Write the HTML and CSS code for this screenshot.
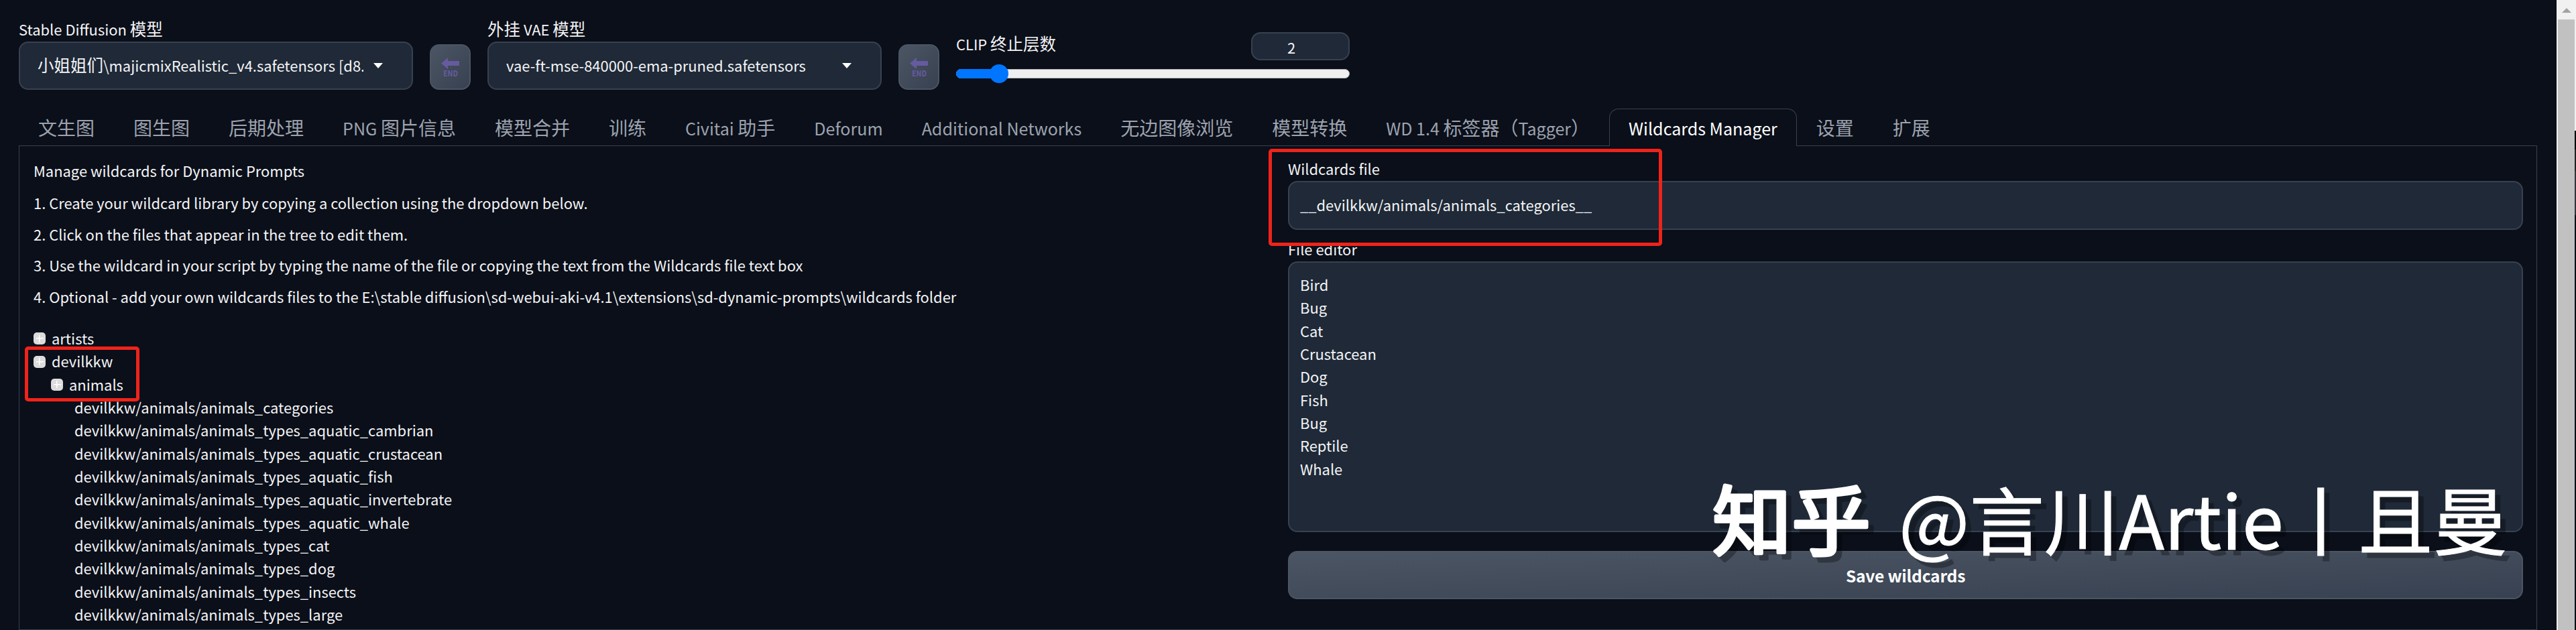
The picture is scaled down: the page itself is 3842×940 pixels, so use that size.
FILE: index.html
```
<!DOCTYPE html>
<html lang="zh-CN">
  <head>
    <meta charset="UTF-8" />
    <meta name="viewport" content="width=device-width, initial-scale=1.0" />
    <title>Stable Diffusion</title>
    <link rel="stylesheet" href="styles.css" />
  </head>
  <body>
    <div class="page">
      <div class="quicksettings">
        <div class="setting">
          <div class="label">Stable Diffusion <span class="zh">模型</span></div>
          <div class="select">
            <span class="select-value"><span class="zh">小姐姐们</span>\majicmixRealistic_v4.safetensors [d8.</span>
            <span class="arrow"></span>
          </div>
        </div>
        <button class="tool">
          <svg width="28" height="40" viewBox="0 0 28 40"><path d="M0 14.5 L10 6 V11 H27 V18 H10 V23 Z" /><text x="3" y="34" textLength="22" lengthAdjust="spacingAndGlyphs">END</text></svg>
        </button>
        <div class="setting">
          <div class="label"><span class="zh">外挂</span> VAE <span class="zh">模型</span></div>
          <div class="select">
            <span class="select-value">vae-ft-mse-840000-ema-pruned.safetensors</span>
            <span class="arrow"></span>
          </div>
        </div>
        <button class="tool">
          <svg width="28" height="40" viewBox="0 0 28 40"><path d="M0 14.5 L10 6 V11 H27 V18 H10 V23 Z" /><text x="3" y="34" textLength="22" lengthAdjust="spacingAndGlyphs">END</text></svg>
        </button>
        <div class="clip">
          <div class="clip-head">
            <div class="clip-label">CLIP <span class="zh">终止层数</span></div>
            <div class="number">2</div>
          </div>
          <div class="track"><div class="fill"></div><div class="thumb"></div></div>
        </div>
      </div>

      <div class="tabs">
        <div class="tab"><span class="zh">文生图</span></div>
        <div class="tab"><span class="zh">图生图</span></div>
        <div class="tab"><span class="zh">后期处理</span></div>
        <div class="tab">PNG <span class="zh">图片信息</span></div>
        <div class="tab"><span class="zh">模型合并</span></div>
        <div class="tab"><span class="zh">训练</span></div>
        <div class="tab">Civitai <span class="zh">助手</span></div>
        <div class="tab">Deforum</div>
        <div class="tab">Additional Networks</div>
        <div class="tab"><span class="zh">无边图像浏览</span></div>
        <div class="tab"><span class="zh">模型转换</span></div>
        <div class="tab">WD 1.4 <span class="zh">标签器（</span>Tagger<span class="zh">）</span></div>
        <div class="tab selected">Wildcards Manager</div>
        <div class="tab"><span class="zh">设置</span></div>
        <div class="tab"><span class="zh">扩展</span></div>
      </div>

      <div class="panel">
        <div class="column help">
          <p>Manage wildcards for Dynamic Prompts</p>
          <ol>
            <li>1. Create your wildcard library by copying a collection using the dropdown below.</li>
            <li>2. Click on the files that appear in the tree to edit them.</li>
            <li>3. Use the wildcard in your script by typing the name of the file or copying the text from the Wildcards file text box</li>
            <li>4. Optional - add your own wildcards files to the E:\stable diffusion\sd-webui-aki-v4.1\extensions\sd-dynamic-prompts\wildcards folder</li>
          </ol>
          <div class="tree">
            <div class="node"><i class="plus"></i>artists</div>
            <div class="node"><i class="plus"></i>devilkkw</div>
            <div class="node child"><i class="plus"></i>animals</div>
            <div class="file">devilkkw/animals/animals_categories</div>
            <div class="file">devilkkw/animals/animals_types_aquatic_cambrian</div>
            <div class="file">devilkkw/animals/animals_types_aquatic_crustacean</div>
            <div class="file">devilkkw/animals/animals_types_aquatic_fish</div>
            <div class="file">devilkkw/animals/animals_types_aquatic_invertebrate</div>
            <div class="file">devilkkw/animals/animals_types_aquatic_whale</div>
            <div class="file">devilkkw/animals/animals_types_cat</div>
            <div class="file">devilkkw/animals/animals_types_dog</div>
            <div class="file">devilkkw/animals/animals_types_insects</div>
            <div class="file">devilkkw/animals/animals_types_large</div>
          </div>
        </div>
        <div class="column editor">
          <div class="field-label">Wildcards file</div>
          <div class="textbox">__devilkkw/animals/animals_categories__</div>
          <div class="field-label second">File editor</div>
          <div class="textarea">Bird
Bug
Cat
Crustacean
Dog
Fish
Bug
Reptile
Whale</div>
          <button class="save">Save wildcards</button>
        </div>
      </div>
    </div>

    <div class="scrollbar">
      <div class="scroll-up"><span class="up-arrow"></span></div>
      <div class="scroll-thumb"></div>
    </div>
    <div class="edge"></div>

    <div class="mark mark-tree"></div>
    <div class="mark mark-file"></div>

    <svg class="watermark" width="1230" height="160" viewBox="0 0 1230 160">
      <text class="brand" x="11" y="109" textLength="236" lengthAdjust="spacingAndGlyphs">知乎</text>
      <text x="289" y="110" textLength="908" lengthAdjust="spacingAndGlyphs">@言川Artie丨且曼</text>
    </svg>
  </body>
</html>
```
FILE: styles.css
```
* {
  box-sizing: border-box;
}
body {
  margin: 0;
  width: 3842px;
  height: 940px;
  overflow: hidden;
  display: flex;
  background-color: #0b0f19;
  color: #f3f4f6;
  font-family: "Noto Sans CJK SC", sans-serif;
  font-size: 21.93px;
  line-height: 34.35px;
}
.zh {
  font-size: 1.117em;
  line-height: 1;
}
.page {
  width: 3813px;
  height: 940px;
  padding: 26px 29px 0 28px;
}
.quicksettings {
  display: flex;
  height: 108px;
}
.setting {
  width: 588px;
}
.label {
  height: 36px;
  line-height: 36px;
  white-space: nowrap;
}
.select {
  display: flex;
  align-items: center;
  height: 72px;
  padding-left: 26px;
  border: 2px solid #374151;
  border-radius: 14px;
  background-color: #1f2937;
}
.select-value {
  width: 486px;
  overflow: hidden;
  white-space: nowrap;
}
.arrow {
  margin-left: 15px;
  border-left: 7px solid transparent;
  border-right: 7px solid transparent;
  border-top: 8px solid white;
}
.tool {
  width: 61px;
  height: 68px;
  margin: 40px 25px 0 25px;
  padding: 0;
  border: 2px solid #4b5563;
  border-radius: 14px;
  background: linear-gradient(to bottom right, #4b5563, #374151);
}
.tool svg {
  display: block;
  margin: 0 auto;
  fill: #665aa0;
  font-family: "Noto Sans CJK SC", sans-serif;
  font-size: 12px;
  font-weight: bold;
}
.clip {
  width: 587px;
  padding-top: 22px;
}
.clip-head {
  display: flex;
  justify-content: space-between;
  height: 42px;
}
.clip-label {
  line-height: 36px;
}
.number {
  width: 147px;
  height: 42px;
  padding-left: 52px;
  border: 2px solid #374151;
  border-radius: 14px;
  background-color: #1f2937;
  line-height: 42px;
}
.track {
  display: flex;
  align-items: center;
  height: 14px;
  margin-top: 13px;
  border: 1px solid #b2b2b2;
  border-radius: 7px;
  background-color: #efefef;
}
.fill {
  width: 60px;
  height: 14px;
  margin-left: -1px;
  border-radius: 7px 0 0 7px;
  background-color: #0075ff;
}
.thumb {
  width: 28px;
  height: 28px;
  margin-left: -10px;
  border-radius: 50%;
  background-color: #0075ff;
}
.tabs {
  display: flex;
  height: 56px;
  margin-top: 28px;
  border-bottom: 1px solid #374151;
  color: #9ca3af;
  font-size: 25.07px;
}
.tab {
  height: 56px;
  padding: 0 28px;
  border: 1px solid transparent;
  border-bottom: none;
  line-height: 57px;
  white-space: nowrap;
}
.selected {
  border-color: #374151;
  border-radius: 14px 14px 0 0;
  background-color: #0b0f19;
  color: white;
}
.panel {
  display: flex;
  height: 722px;
  padding: 0 20px 0 21px;
  border: 1px solid #374151;
  border-top: none;
}
.help {
  width: 1871px;
  padding-top: 20px;
}
p,
ol {
  margin: 0;
  padding: 0;
  list-style: none;
  white-space: nowrap;
}
p {
  height: 48px;
}
li {
  height: 46.5px;
}
.tree {
  margin-top: 16px;
}
.node {
  display: flex;
  align-items: center;
  height: 34.35px;
}
.child {
  padding-left: 26px;
}
.plus {
  width: 18px;
  height: 18px;
  margin-right: 9px;
  border-radius: 5px;
  background: linear-gradient(white, white) center / 11px 1.5px no-repeat,
    linear-gradient(white, white) center / 1.5px 11px no-repeat, #dcdcdc;
}
.file {
  height: 34.35px;
  padding-left: 61px;
}
.editor {
  width: 1842px;
  padding-top: 17px;
}
.field-label {
  height: 35px;
}
.second {
  margin-top: 12px;
}
.textbox {
  height: 73px;
  padding: 0 16px;
  border: 2px solid #374151;
  border-radius: 14px;
  background-color: #1f2937;
  line-height: 68px;
}
.textarea {
  height: 404px;
  padding: 16px;
  border: 2px solid #374151;
  border-radius: 14px;
  background-color: #1f2937;
  white-space: pre-line;
}
.save {
  display: block;
  width: 1842px;
  height: 72px;
  margin-top: 28px;
  border: 2px solid #4b5563;
  border-radius: 14px;
  background: linear-gradient(to bottom right, #4b5563, #374151);
  color: white;
  font-family: inherit;
  font-size: 24.6px;
  font-weight: bold;
  letter-spacing: -0.25px;
}
.scrollbar {
  width: 29px;
  height: 940px;
  padding-left: 2px;
  background-color: #f1f1f1;
}
.scroll-up {
  display: flex;
  justify-content: center;
  width: 25px;
  height: 29px;
  padding-top: 12px;
}
.up-arrow {
  height: 7px;
  border-left: 7px solid transparent;
  border-right: 7px solid transparent;
  border-bottom: 7px solid #a3a3a3;
}
.scroll-thumb {
  width: 25px;
  height: 911px;
  background-color: #c1c1c1;
}
/* strip of the desktop next to the window */
.edge {
  position: absolute;
  left: 3840px;
  top: 195px;
  width: 2px;
  height: 745px;
  background: linear-gradient(#000 28px, #222 28px, #222 60px, #333438 60px, #333438 126px, #0b0f19 126px);
}
/* red frames over the content */
.mark {
  position: absolute;
  border: 5px solid #f0231a;
  border-radius: 5px;
}
.mark-tree {
  left: 37px;
  top: 517px;
  width: 171px;
  height: 82px;
}
.mark-file {
  left: 1892px;
  top: 222px;
  width: 587px;
  height: 145px;
}
.watermark {
  position: absolute;
  left: 2543px;
  top: 710px;
  fill: white;
  stroke: white;
  stroke-width: 1px;
  font-family: "Noto Sans CJK SC", sans-serif;
  font-size: 110px;
  filter: drop-shadow(8px 8px 0 rgba(0, 0, 0, 0.3));
}
.brand {
  font-size: 113px;
  stroke-width: 5px;
  stroke-linejoin: round;
}
```
